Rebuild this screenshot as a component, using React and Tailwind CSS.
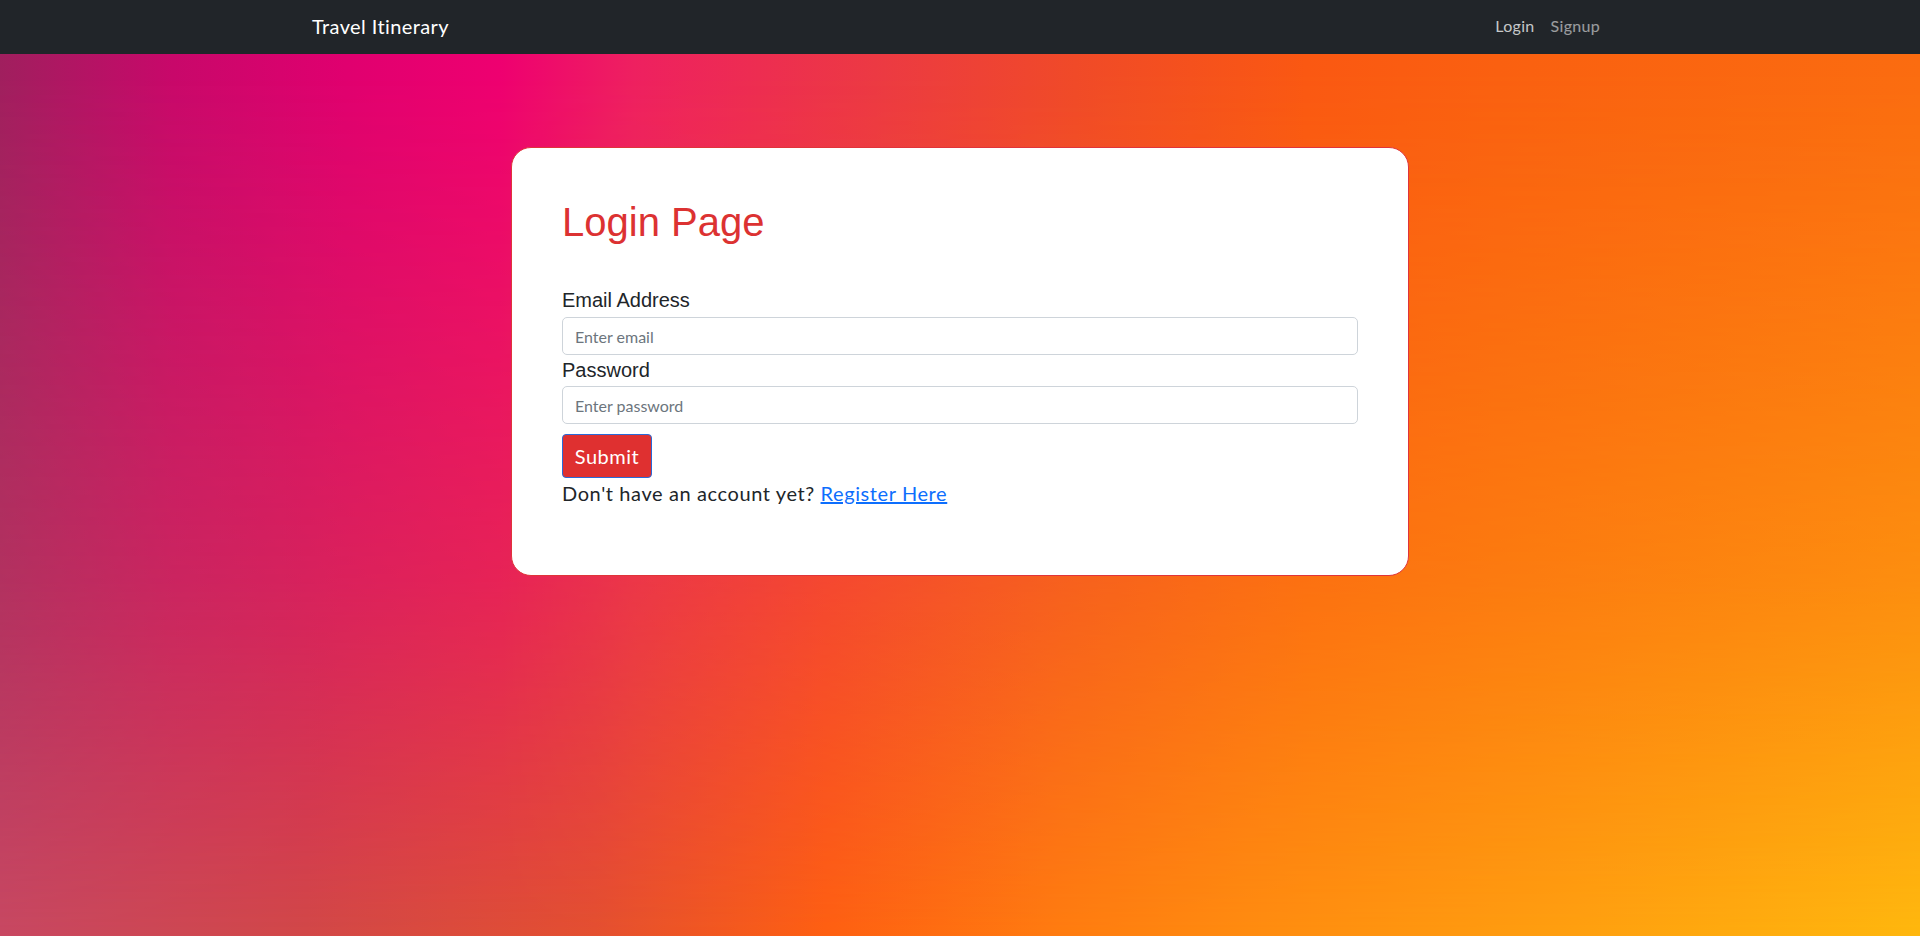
import React, { useState } from 'react';

const Navbar = () => (
  <nav className="h-[54px] bg-[#212529] flex items-center">
    <div className="w-[1320px] mx-auto px-3 -mt-[2px] flex items-center justify-between">
      <a href="#" className="text-[20px] leading-[30px] tracking-[0.4px] text-white">
        Travel Itinerary
      </a>
      <div className="flex items-center text-[16px] leading-6 tracking-[0.3px]">
        <a href="#" className="px-2 text-white/75">Login</a>
        <a href="#" className="px-2 text-white/55">Signup</a>
      </div>
    </div>
  </nav>
);

const LoginCard = () => {
  const [email, setEmail] = useState('');
  const [password, setPassword] = useState('');

  return (
    <div className="w-[898px] mx-auto mt-[93px] bg-white border border-[#e0343a] rounded-[20px] px-[50px] pt-[50px] pb-[51px]">
      <h1 className="font-['Liberation_Sans',Arial,sans-serif] tracking-normal text-[40px] leading-[48px] text-[#dc3232]">
        Login Page
      </h1>

      <form className="mt-[39px]" onSubmit={(e) => e.preventDefault()}>
        <label className="block font-['Liberation_Sans',Arial,sans-serif] tracking-normal text-[20px] leading-[30px] text-[#212529] mb-[2px]">
          Email Address
        </label>
        <input
          type="email"
          value={email}
          onChange={(e) => setEmail(e.target.value)}
          placeholder="Enter email"
          className="block w-full h-[38px] px-3 bg-white border border-[#ced4da] rounded-[5px] text-[16px] text-[#212529] placeholder-[#6c757d] focus:outline-none"
        />

        <label className="block font-['Liberation_Sans',Arial,sans-serif] tracking-normal text-[20px] leading-[30px] text-[#212529] mb-[1px]">
          Password
        </label>
        <input
          type="password"
          value={password}
          onChange={(e) => setPassword(e.target.value)}
          placeholder="Enter password"
          className="block w-full h-[38px] px-3 bg-white border border-[#ced4da] rounded-[5px] text-[16px] text-[#212529] placeholder-[#6c757d] focus:outline-none"
        />

        <button
          type="submit"
          className="mt-[10px] w-[90px] h-[44px] bg-[#df3030] border border-[#2a6ad8] rounded-[4px] text-white text-[20px] leading-[30px] tracking-[0.5px] flex items-center justify-center"
        >
          Submit
        </button>

        <p className="text-[20px] leading-[30px] tracking-[0.6px] text-[#212529] mb-4">
          Don't have an account yet?{' '}
          <a href="#" className="text-[#0d6efd] underline">Register Here</a>
        </p>
      </form>
    </div>
  );
};

export default function App() {
  return (
    <div className="relative min-h-[936px] font-['Lato','Noto_Sans',sans-serif] bg-[linear-gradient(to_right,#c84862_0%,#d24848_16%,#e45030_31%,#fe6012_43%,#ff7c10_55%,#ff8c10_65%,#ffa010_82%,#ffb80e_100%)]">
      {/* upper half of the backdrop, faded out toward the bottom */}
      <div className="absolute inset-0 [mask-image:linear-gradient(to_bottom,black_0%,black_8%,rgba(0,0,0,0.55)_62%,transparent_100%)] bg-[linear-gradient(to_right,#a01f5e_0%,#c8086a_9%,#e0006f_18%,#ee0070_26%,#ee2060_33%,#ec3a42_46%,#f04a28_56%,#fa5812_68%,#fa6010_78%,#fb6c10_100%)]" />
      <div className="relative">
        <Navbar />
        <LoginCard />
      </div>
    </div>
  );
}
